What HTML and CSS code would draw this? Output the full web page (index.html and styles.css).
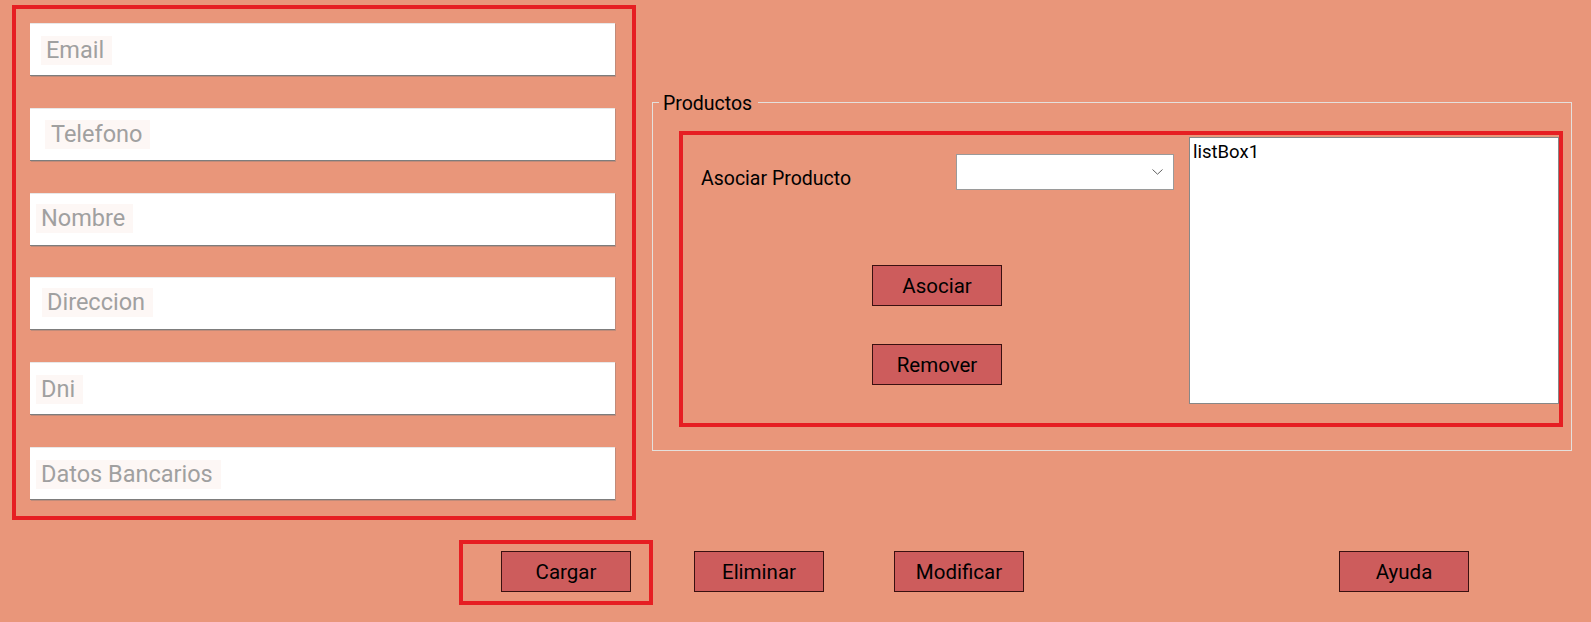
FILE: index.html
```html
<!DOCTYPE html>
<html lang="es">
<head>
<meta charset="utf-8">
<title>Clientes</title>
<link rel="stylesheet" href="styles.css">
</head>
<body>
<div class="form">
  <div class="top">
    <div class="fields redbox">
      <div class="textbox"><span class="ph ph-email">Email</span></div>
      <div class="textbox"><span class="ph ph-tel">Telefono</span></div>
      <div class="textbox"><span class="ph ph-nombre">Nombre</span></div>
      <div class="textbox"><span class="ph ph-dir">Direccion</span></div>
      <div class="textbox"><span class="ph ph-dni">Dni</span></div>
      <div class="textbox"><span class="ph ph-datos">Datos Bancarios</span></div>
    </div>
    <fieldset class="group">
      <legend class="group-title">Productos</legend>
      <div class="products redbox">
        <div class="products-left">
          <div class="assoc-row">
            <span class="assoc-label">Asociar Producto</span>
            <div class="combo">
              <svg class="chev" width="11" height="6" viewBox="0 0 11 6"><path d="M0.5 0.5 L5.5 5.2 L10.5 0.5" fill="none" stroke="#606060" stroke-width="1"/></svg>
            </div>
          </div>
          <div class="assoc-buttons">
            <button class="btn">Asociar</button>
            <button class="btn">Remover</button>
          </div>
        </div>
        <div class="listbox">listBox1</div>
      </div>
    </fieldset>
  </div>
  <div class="bottom">
    <div class="cargar-box redbox"><button class="btn">Cargar</button></div>
    <button class="btn btn-eliminar">Eliminar</button>
    <button class="btn btn-modificar">Modificar</button>
    <button class="btn btn-ayuda">Ayuda</button>
  </div>
</div>
</body>
</html>
```
FILE: styles.css
```css
html, body {
  margin: 0;
  padding: 0;
}
body {
  background: #e9967a;
  font-family: Roboto, "Liberation Sans", Arial, sans-serif;
  width: 1591px;
  height: 622px;
  overflow: hidden;
}
.form {
  display: flex;
  flex-direction: column;
}
.top {
  display: flex;
  align-items: flex-start;
}
.redbox {
  border: 4px solid #e61e22;
  box-sizing: border-box;
}
.fields {
  margin: 5px 0 0 12px;
  width: 624px;
  height: 515px;
  padding: 14px 18px 0 14px;
  display: flex;
  flex-direction: column;
  gap: 31.8px;
}
.textbox {
  width: 585px;
  height: 53px;
  flex: none;
  box-sizing: border-box;
  background: #fff;
  border-top: 1px solid #e8e8e8;
  border-bottom: 1px solid #7d7d7d;
  box-shadow: 1px 1px 0 rgba(120,120,120,0.35);
  display: flex;
  align-items: flex-start;
}
.ph {
  display: inline-block;
  background: #fdf7f5;
  color: #a0a0a0;
  font-size: 23.5px;
  line-height: 29px;
  height: 29px;
  padding: 0 8px 0 5px;
}
.ph-email { margin: 12px 0 0 11px; }
.ph-tel { margin: 11px 0 0 15px; padding-left: 6px; }
.ph-nombre { margin: 10px 0 0 6px; }
.ph-dir { margin: 10px 0 0 12px; }
.ph-dni { margin: 12px 0 0 6px; }
.ph-datos { margin: 12px 0 0 6px; }

.group {
  margin: 89px 0 0 16px;
  padding: 16px 8px 23px 26px;
  border: 1px solid #e4e0dc;
  width: 920px;
  box-sizing: border-box;
  min-width: 0;
}
.group-title {
  margin-left: -20px;
  padding: 4px 6px 0 4px;
  font-size: 19.5px;
  line-height: 22px;
  color: #000;
}
.products {
  width: 884px;
  height: 296px;
  display: flex;
  align-items: flex-start;
}
.products-left {
  width: 488px;
  padding-left: 18px;
  display: flex;
  flex-direction: column;
}
.assoc-row {
  display: flex;
  align-items: flex-start;
  margin-top: 19px;
}
.assoc-label {
  width: 255px;
  font-size: 19.5px;
  color: #000;
  margin-top: 14px;
  line-height: 22px;
}
.combo {
  width: 218px;
  height: 36px;
  box-sizing: border-box;
  background: #fff;
  border: 1px solid #9a9a9a;
  display: flex;
  align-items: center;
  justify-content: flex-end;
  padding-right: 10px;
}
.chev {
  display: block;
  margin-top: -1px;
}
.assoc-buttons {
  display: flex;
  flex-direction: column;
  gap: 38px;
  margin: 75px 0 0 171px;
}
.btn {
  width: 130px;
  height: 41px;
  box-sizing: border-box;
  background: #cd5c5c;
  border: 1px solid #3a1010;
  color: #000;
  font-family: Roboto, "Liberation Sans", Arial, sans-serif;
  font-size: 20.5px;
  padding: 0;
  margin: 0;
}
.listbox {
  margin: 2px 0 0 0;
  width: 370px;
  height: 267px;
  box-sizing: border-box;
  background: #fff;
  border: 1px solid #888;
  padding: 3px 3px;
  font-size: 18.5px;
  line-height: 22px;
  color: #000;
}
.bottom {
  display: flex;
  align-items: flex-start;
  margin-top: 20px;
}
.cargar-box {
  margin-left: 459px;
  width: 194px;
  height: 65px;
  padding: 7px 0 0 38px;
}
.btn-eliminar { margin: 11px 0 0 41px; }
.btn-modificar { margin: 11px 0 0 70px; }
.btn-ayuda { margin: 11px 0 0 315px; }
```
